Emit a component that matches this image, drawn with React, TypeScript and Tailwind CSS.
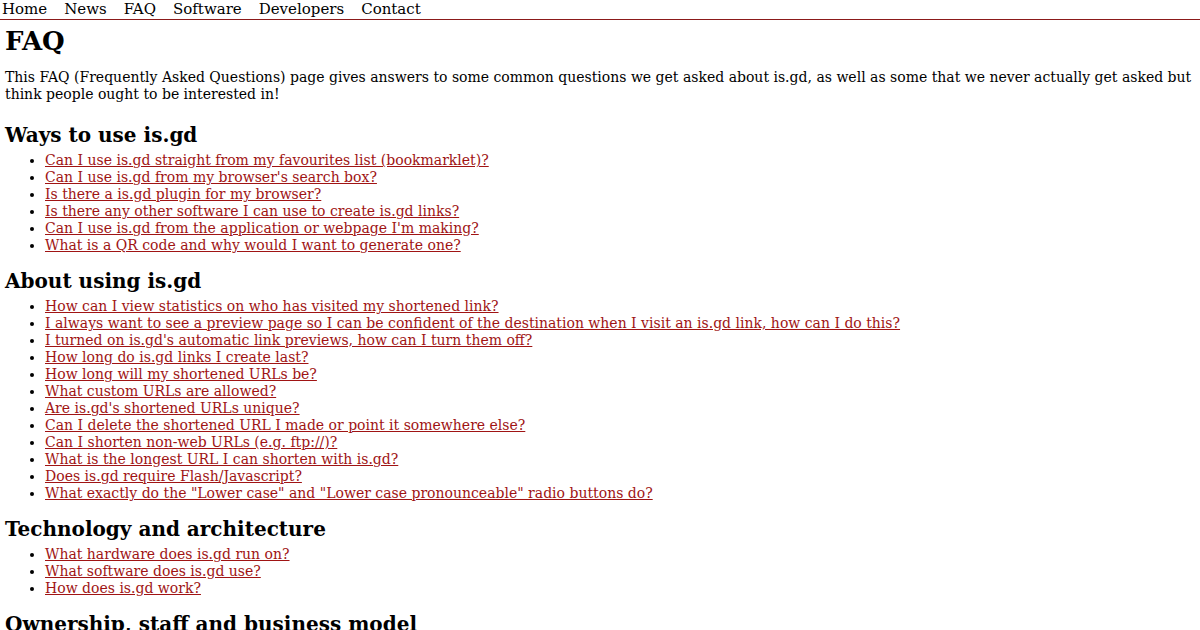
import React from "react";

const sections: { title: string; items: string[] }[] = [
  {
    title: "Ways to use is.gd",
    items: [
      "Can I use is.gd straight from my favourites list (bookmarklet)?",
      "Can I use is.gd from my browser's search box?",
      "Is there a is.gd plugin for my browser?",
      "Is there any other software I can use to create is.gd links?",
      "Can I use is.gd from the application or webpage I'm making?",
      "What is a QR code and why would I want to generate one?",
    ],
  },
  {
    title: "About using is.gd",
    items: [
      "How can I view statistics on who has visited my shortened link?",
      "I always want to see a preview page so I can be confident of the destination when I visit an is.gd link, how can I do this?",
      "I turned on is.gd's automatic link previews, how can I turn them off?",
      "How long do is.gd links I create last?",
      "How long will my shortened URLs be?",
      "What custom URLs are allowed?",
      "Are is.gd's shortened URLs unique?",
      "Can I delete the shortened URL I made or point it somewhere else?",
      "Can I shorten non-web URLs (e.g. ftp://)?",
      "What is the longest URL I can shorten with is.gd?",
      "Does is.gd require Flash/Javascript?",
      'What exactly do the "Lower case" and "Lower case pronounceable" radio buttons do?',
    ],
  },
  {
    title: "Technology and architecture",
    items: [
      "What hardware does is.gd run on?",
      "What software does is.gd use?",
      "How does is.gd work?",
    ],
  },
  {
    title: "Ownership, staff and business model",
    items: ["Who owns is.gd?", "How does is.gd make money?"],
  },
];

export default function App() {
  return (
    <div className="bg-white text-black h-[630px] overflow-hidden font-['DejaVu_Serif',serif]">
      <nav className="flex gap-[17px] px-[2px] h-[20px] border-b border-[#8b1a1a] text-[15px] leading-[19px]">
        {["Home", "News", "FAQ", "Software", "Developers", "Contact"].map((n) => (
          <span key={n}>{n}</span>
        ))}
      </nav>
      <div className="px-[5px]">
        <h1 className="text-[26px] font-bold leading-[30px] mt-[6px]">FAQ</h1>
        <p className="text-[14px] leading-[17px] mt-[13px]">
          This FAQ (Frequently Asked Questions) page gives answers to some common questions we get asked about is.gd, as well as some that we never actually get asked but think people ought to be interested in!
        </p>
        {sections.map((s, i) => (
          <div key={s.title}>
            <h2
              className={
                "text-[20px] font-bold leading-[23px] " + (i === 0 ? "mt-[21px]" : "mt-[16px]")
              }
            >
              {s.title}
            </h2>
            <ul className="list-disc pl-[40px] text-[14px] leading-[17px] mt-[5px]">
              {s.items.map((it) => (
                <li key={it}>
                  <a href="#" className="text-[#a01414] underline">
                    {it}
                  </a>
                </li>
              ))}
            </ul>
          </div>
        ))}
      </div>
    </div>
  );
}
